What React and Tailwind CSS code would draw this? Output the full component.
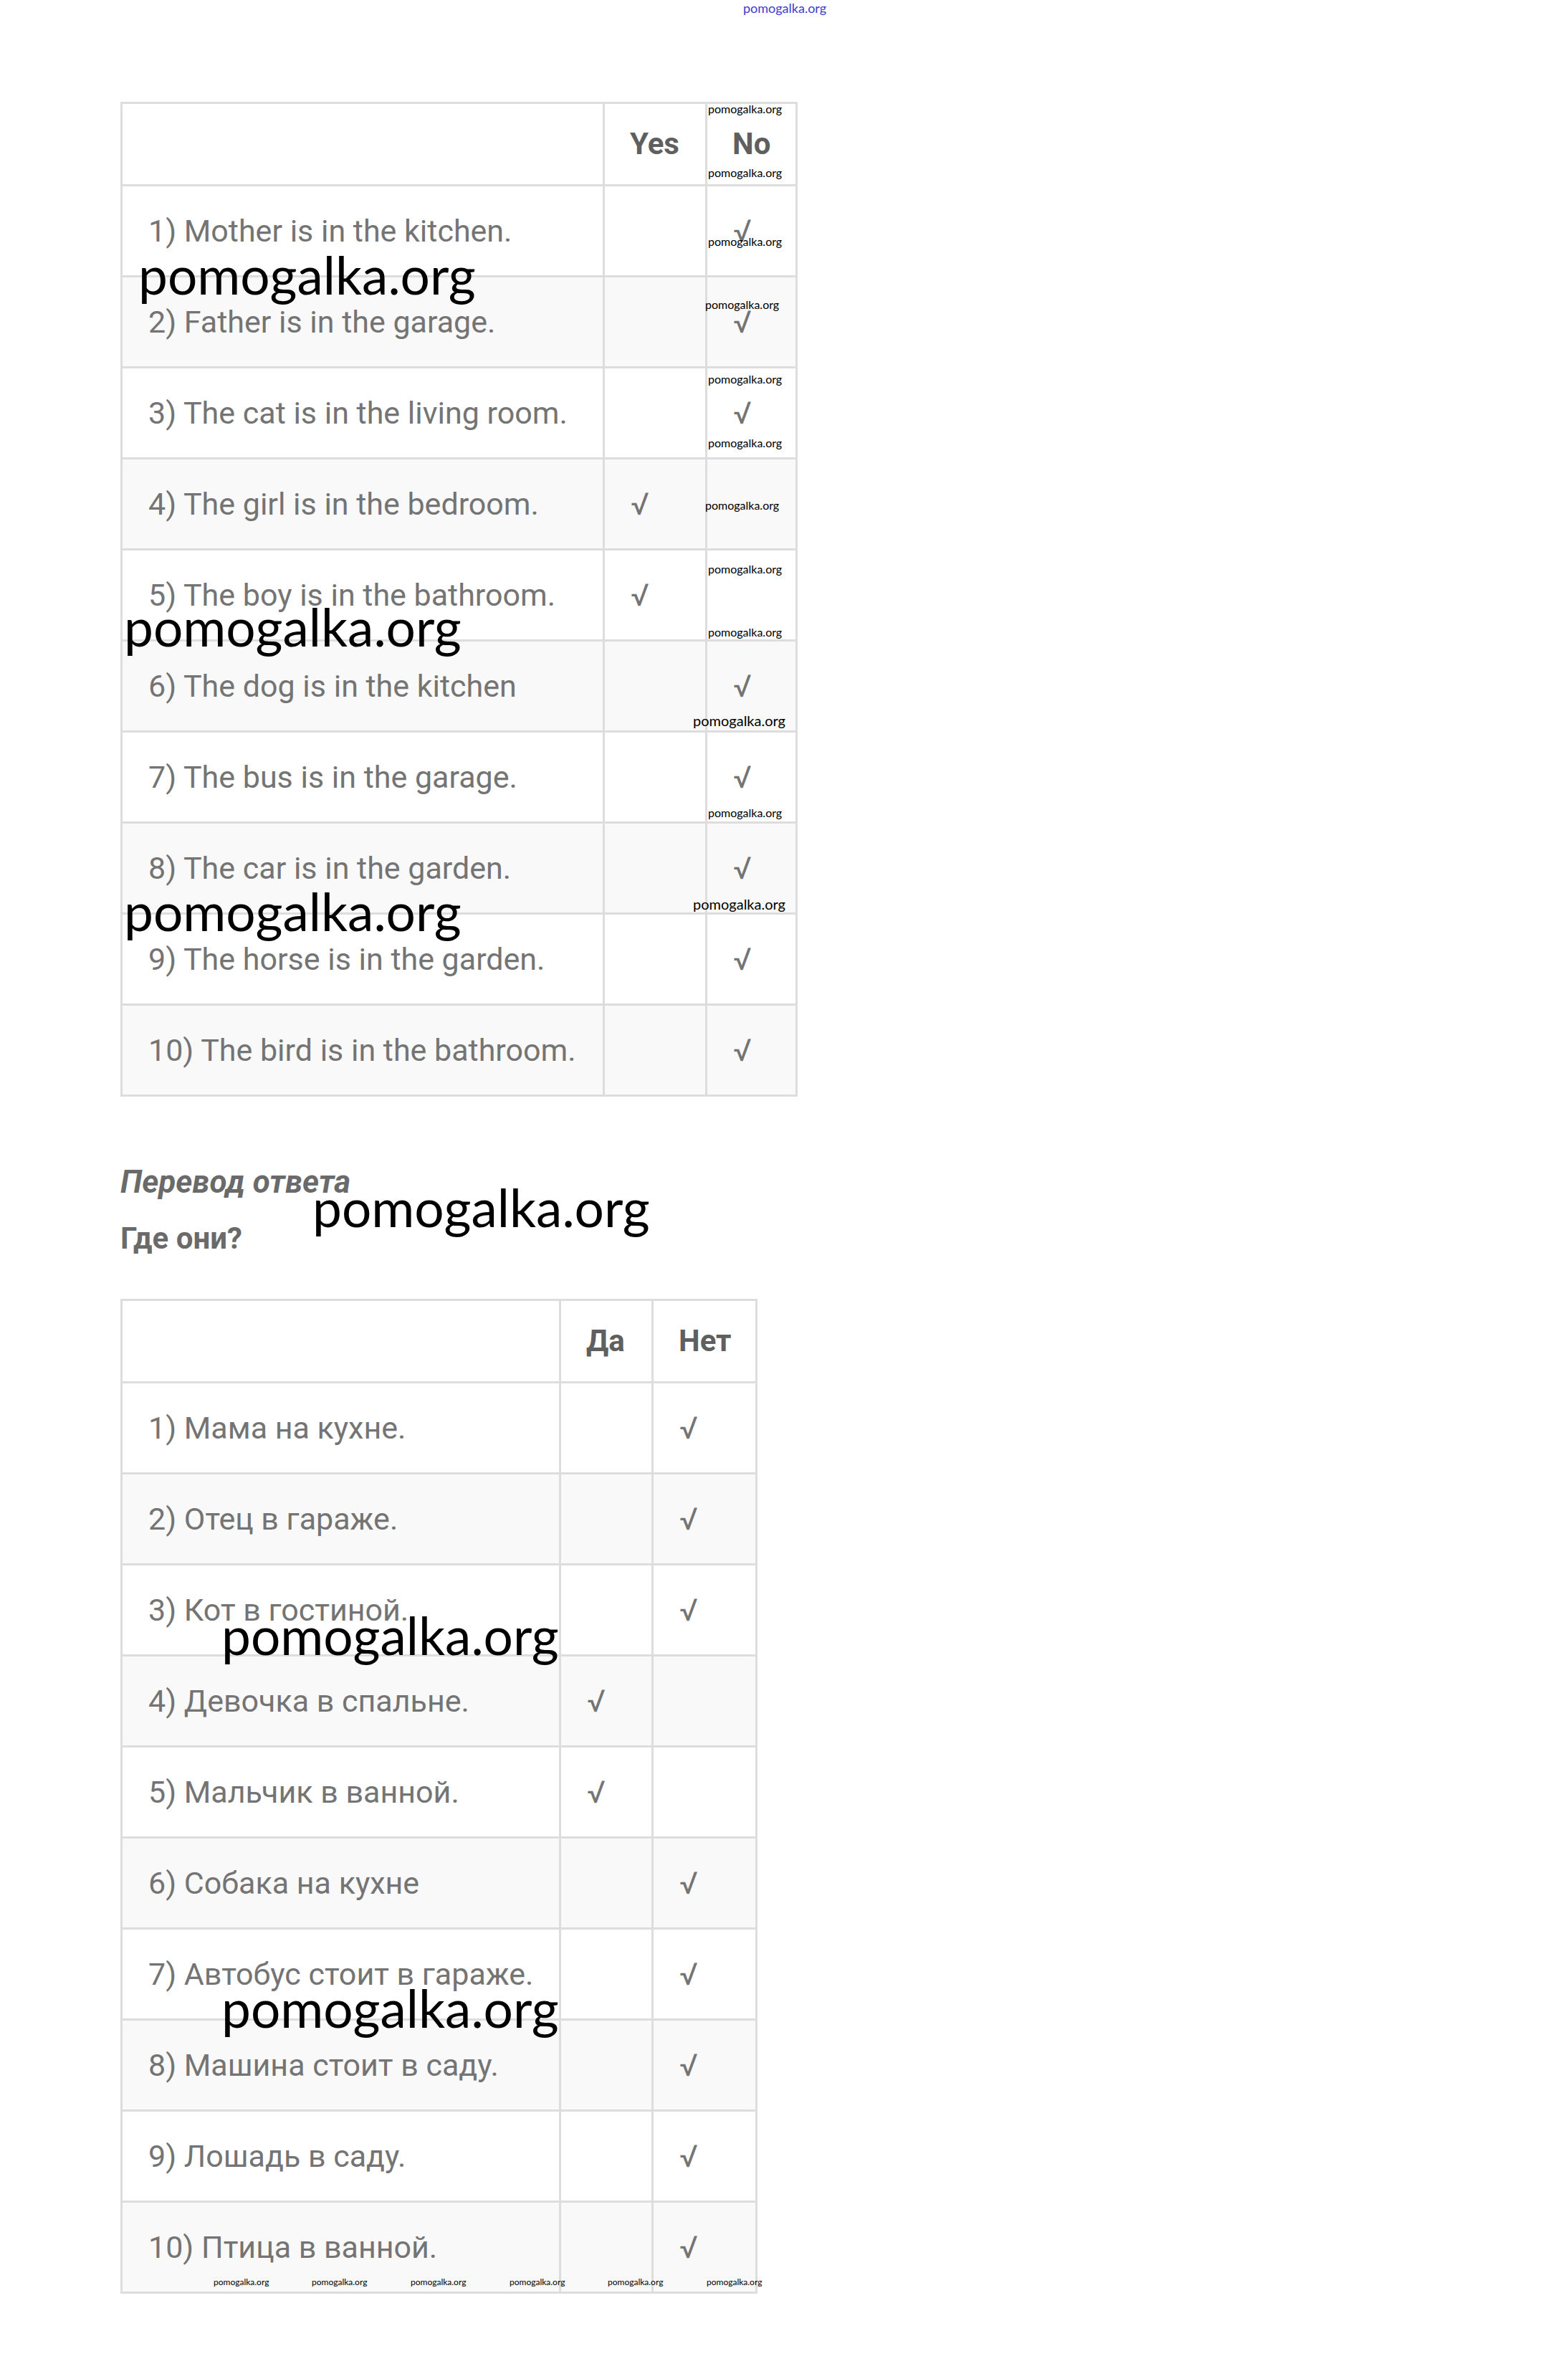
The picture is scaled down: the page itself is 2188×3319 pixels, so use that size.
const enRows = [
  ['1) Mother is in the kitchen.', 'no'],
  ['2) Father is in the garage.', 'no'],
  ['3) The cat is in the living room.', 'no'],
  ['4) The girl is in the bedroom.', 'yes'],
  ['5) The boy is in the bathroom.', 'yes'],
  ['6) The dog is in the kitchen', 'no'],
  ['7) The bus is in the garage.', 'no'],
  ['8) The car is in the garden.', 'no'],
  ['9) The horse is in the garden.', 'no'],
  ['10) The bird is in the bathroom.', 'no'],
];

const ruRows = [
  ['1) Мама на кухне.', 'no'],
  ['2) Отец в гараже.', 'no'],
  ['3) Кот в гостиной.', 'no'],
  ['4) Девочка в спальне.', 'yes'],
  ['5) Мальчик в ванной.', 'yes'],
  ['6) Собака на кухне', 'no'],
  ['7) Автобус стоит в гараже.', 'no'],
  ['8) Машина стоит в саду.', 'no'],
  ['9) Лошадь в саду.', 'no'],
  ['10) Птица в ванной.', 'no'],
];

function AnswerTable({ cols, yes, no, rows }) {
  const head = 'h-[112px] bg-white flex items-center pl-[35px] font-bold text-[42px] leading-none text-[#5f5f5f]';
  return (
    <div className={`grid ${cols} gap-[3px] bg-[#dddddd] p-[3px] w-fit`}>
      <div className={head}></div>
      <div className={head}>{yes}</div>
      <div className={head}>{no}</div>
      {rows.map(([text, answer], i) => {
        const bg = i % 2 === 1 ? 'bg-[#f9f9f9]' : 'bg-white';
        const cell = `h-[124px] ${bg} flex items-center pl-[36px] text-[43px] leading-none text-[#747474]`;
        return [
          <div key={`t${i}`} className={cell}>{text}</div>,
          <div key={`y${i}`} className={cell}>{answer === 'yes' ? '√' : ''}</div>,
          <div key={`n${i}`} className={cell}>{answer === 'no' ? '√' : ''}</div>,
        ];
      })}
    </div>
  );
}

export default function App() {
  return (
    <div className="relative w-[2188px] min-h-[3319px] bg-white font-['Roboto','Liberation_Sans',sans-serif]">
      <div className="pt-[142px] pl-[168px] pb-[122px]">
        <AnswerTable cols="grid-cols-[670px_140px_123px]" yes="Yes" no="No" rows={enRows} />

        <p className="mt-[97px] text-[44px] leading-none font-bold italic text-[#6a6a6a]">Перевод ответа</p>
        <p className="mt-[36px] text-[42px] leading-none font-bold text-[#6a6a6a]">Где они?</p>

        <div className="mt-[63px]">
          <AnswerTable cols="grid-cols-[609px_126px_142px]" yes="Да" no="Нет" rows={ruRows} />
        </div>
      </div>

      {/* watermarks */}
      <div className="font-['Lato',sans-serif] leading-none text-black">
        <span className="absolute left-[1037px] top-[2px] text-[18px] text-[#3c3cd2]">pomogalka.org</span>

        <span className="absolute left-[988px] top-[144px] text-[16px]">pomogalka.org</span>
        <span className="absolute left-[988px] top-[233px] text-[16px]">pomogalka.org</span>
        <span className="absolute left-[988px] top-[329px] text-[16px]">pomogalka.org</span>
        <span className="absolute left-[984px] top-[417px] text-[16px]">pomogalka.org</span>
        <span className="absolute left-[988px] top-[521px] text-[16px]">pomogalka.org</span>
        <span className="absolute left-[988px] top-[610px] text-[16px]">pomogalka.org</span>
        <span className="absolute left-[984px] top-[697px] text-[16px]">pomogalka.org</span>
        <span className="absolute left-[988px] top-[786px] text-[16px]">pomogalka.org</span>
        <span className="absolute left-[988px] top-[874px] text-[16px]">pomogalka.org</span>
        <span className="absolute left-[967px] top-[995px] text-[20px]">pomogalka.org</span>
        <span className="absolute left-[988px] top-[1126px] text-[16px]">pomogalka.org</span>
        <span className="absolute left-[967px] top-[1251px] text-[20px]">pomogalka.org</span>

        <span className="absolute left-[193px] top-[347px] text-[73px]">pomogalka.org</span>
        <span className="absolute left-[173px] top-[838px] text-[73px]">pomogalka.org</span>
        <span className="absolute left-[173px] top-[1235px] text-[73px]">pomogalka.org</span>
        <span className="absolute left-[436px] top-[1648px] text-[73px]">pomogalka.org</span>
        <span className="absolute left-[309px] top-[2245px] text-[73px]">pomogalka.org</span>
        <span className="absolute left-[309px] top-[2765px] text-[73px]">pomogalka.org</span>

        <span className="absolute left-[298px] top-[3178px] text-[12px]">pomogalka.org</span>
        <span className="absolute left-[435px] top-[3178px] text-[12px]">pomogalka.org</span>
        <span className="absolute left-[573px] top-[3178px] text-[12px]">pomogalka.org</span>
        <span className="absolute left-[711px] top-[3178px] text-[12px]">pomogalka.org</span>
        <span className="absolute left-[848px] top-[3178px] text-[12px]">pomogalka.org</span>
        <span className="absolute left-[986px] top-[3178px] text-[12px]">pomogalka.org</span>
      </div>
    </div>
  );
}
